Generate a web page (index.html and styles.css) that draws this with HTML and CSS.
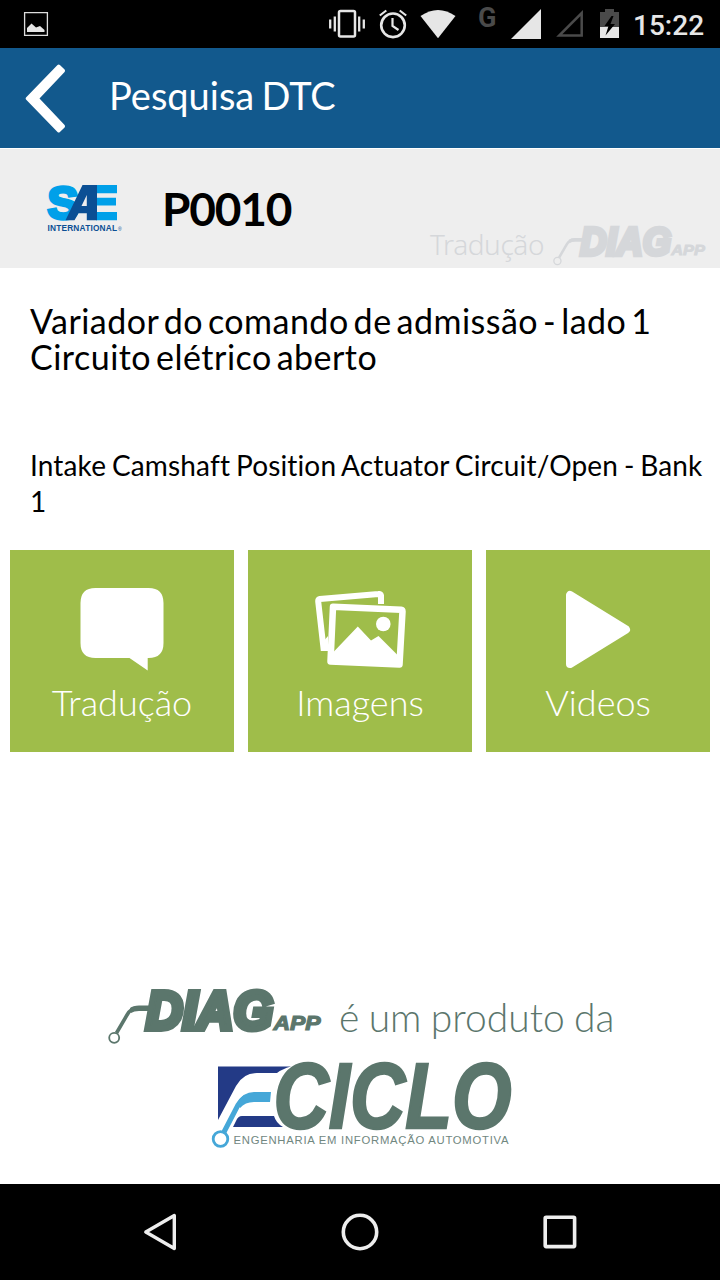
FILE: index.html
```html
<!DOCTYPE html>
<html lang="pt-BR">
<head>
<meta charset="utf-8">
<title>Pesquisa DTC</title>
<link rel="stylesheet" href="styles.css">
</head>
<body>
<div class="screen">
  <div class="status">
    <svg class="s-pic" width="24" height="48" viewBox="24 0 24 48"><path d="M24.600 12.600h22.800v22.800h-22.800z" fill="none" stroke="#ddd" stroke-width="1.300"/><path d="M27 32v-4l4.500-4.500 4.500 4 4-1.500 4.500 4v2z" fill="#e6e6e6"/></svg>
    <svg class="s-vib" width="36" height="48" viewBox="329 0 36 48"><rect x="339" y="11" width="16" height="25.500" rx="1.500" fill="none" stroke="#e6e6e6" stroke-width="2.500"/><path d="M330.200 19.500v9M334.800 16.500v15M359.200 16.500v15M363.800 19.500v9" stroke="#e6e6e6" stroke-width="2.300"/></svg>
    <svg class="s-alarm" width="28" height="48" viewBox="379 0 28 48"><circle cx="393" cy="25.300" r="11.800" fill="none" stroke="#e6e6e6" stroke-width="2.600"/><path d="M379.800 15.500l6.500-5M406.200 15.500l-6.500-5M392.500 18v8l6 4" fill="none" stroke="#e6e6e6" stroke-width="2.200"/></svg>
    <svg class="s-wifi" width="36" height="48" viewBox="420 0 36 48"><path d="M420.500 16Q438 4 455.500 16L438 38.300z" fill="#e6e6e6"/></svg>
    <span class="s-g">G</span>
    <svg class="s-sig" width="30" height="48" viewBox="511 0 30 48"><path d="M541 9v30h-30z" fill="#e6e6e6"/></svg>
    <svg class="s-empty" width="28" height="48" viewBox="555 0 28 48"><path d="M581.700 13v22.500h-22.500z" fill="none" stroke="#4a4a4a" stroke-width="2.500"/></svg>
    <svg class="s-bat" width="19" height="48" viewBox="600 0 19 48"><path d="M600 12h5v-3h9v3h5v15h-19z" fill="#4a4a4a"/><path d="M600 27h19v11h-19z" fill="#e6e6e6"/><path d="M611.500 16l-7 10h4l-3 9.500 9.500-11.500h-4.500l3-8z" fill="#000"/></svg>
    <span class="s-time">15:22</span>
  </div>

  <header class="appbar">
    <svg class="back" width="42" height="72" viewBox="25 62 42 72"><path d="M57.500 65q1.200-1 2.400 0l4.700 4.500q1 1.200 0 2.400L39.500 98.500l25.100 26.600q1 1.200 0 2.400l-4.700 4.500q-1.200 1-2.400 0L26 99.500q-.800-1 0-2z" fill="#fff"/></svg>
    <h1 class="title">Pesquisa DTC</h1>
  </header>

  <section class="code-row">
    <svg class="sae" width="78" height="52" viewBox="46 182 78 52">
      <text class="sae-s" x="47.500" y="219" textLength="31" lengthAdjust="spacingAndGlyphs">S</text>
      <path d="M96 185h21v8.300H96zM96 197.700h20v7.800H96zM96 212h21v8.300H96z" fill="#00a0e9"/>
      <path d="M82.500 185H97v35.300H86.800v-7H78.500l-4 7H65.500zM86.800 195l-5.300 11h5.300z" fill="#0b4f94" fill-rule="evenodd"/>
      <text class="sae-int" x="47.500" y="230.800" textLength="69.500">INTERNATIONAL</text>
      <text class="sae-r" x="118" y="231">®</text>
    </svg>
    <h2 class="code">P0010</h2>
    <div class="watermark">
      <span class="wm-text">Tradução</span>
      <svg class="wm-logo" width="153" height="41" viewBox="0 0 214 57">
        <path d="M8.500 44L19 26Q23 18.800 30 18.800H42" fill="none" stroke="currentColor" stroke-width="3.600"/>
        <path d="M22 19Q25 16.500 31 16.500H42V22H31Q26 22 23 24Z" fill="currentColor"/>
        <circle cx="6.200" cy="48.800" r="5" fill="none" stroke="currentColor" stroke-width="1.800"/>
        <text class="diag-word" x="38" y="40" textLength="127" lengthAdjust="spacingAndGlyphs">DIAG</text>
        <text class="diag-app" x="165.500" y="41" textLength="47" lengthAdjust="spacingAndGlyphs">APP</text>
      </svg>
    </div>
  </section>

  <main class="content">
    <p class="desc-pt">Variador do comando de admissão - lado 1<br>Circuito elétrico aberto</p>
    <p class="desc-en">Intake Camshaft Position Actuator Circuit/Open - Bank<br>1</p>
  </main>

  <nav class="tiles">
    <a class="tile">
      <svg width="224" height="202" viewBox="10 550 224 202"><path d="M95.500 588h53q15 0 15 15v40q0 15-15 15h-.800v12.500L129.500 658H95.500q-15 0-15-15v-40q0-15 15-15z" fill="#fff"/></svg>
      <span class="tile-label">Tradução</span>
    </a>
    <a class="tile">
      <svg width="224" height="202" viewBox="248 550 224 202">
        <path d="M381 604V595.500Q380.500 593.700 378.500 594L320 599Q318 599.500 318.200 601.500L323.500 648H328" fill="none" stroke="#fff" stroke-width="6"/>
        <path d="M323 642l5-6v13h-5z" fill="#fff"/>
        <path d="M333 606.800L401 609.800Q402.500 610 402.500 611.500L399.500 664.500L330.500 661.500z" fill="#9fbd4a" stroke="#fff" stroke-width="6.500" stroke-linejoin="round"/>
        <path d="M333 652.500L357.800 626.500 371 640.500 378.500 636 398 655.500V664H332z" fill="#fff"/>
        <circle cx="383.300" cy="624" r="7.300" fill="#fff"/>
      </svg>
      <span class="tile-label">Imagens</span>
    </a>
    <a class="tile">
      <svg width="224" height="202" viewBox="486 550 224 202"><path d="M570 595v69l56-34.500z" fill="#fff" stroke="#fff" stroke-width="8" stroke-linejoin="round"/></svg>
      <span class="tile-label">Videos</span>
    </a>
  </nav>

  <footer class="brand">
    <div class="brand-line">
      <svg class="brand-diag" width="214" height="57" viewBox="0 0 214 57">
        <path d="M8.500 44L19 26Q23 18.800 30 18.800H42" fill="none" stroke="currentColor" stroke-width="3.600"/>
        <path d="M22 19Q25 16.500 31 16.500H42V22H31Q26 22 23 24Z" fill="currentColor"/>
        <circle cx="6.200" cy="48.800" r="5" fill="none" stroke="currentColor" stroke-width="1.800"/>
        <text class="diag-word" x="38" y="40" textLength="127" lengthAdjust="spacingAndGlyphs">DIAG</text>
        <text class="diag-app" x="165.500" y="41" textLength="47" lengthAdjust="spacingAndGlyphs">APP</text>
      </svg>
      <span class="brand-text">é um produto da</span>
    </div>
    <svg class="ciclo" width="304" height="90" viewBox="210 1060 304 90">
      <path d="M218 1066.500H291Q282 1069 277 1073H257Q243 1073 236 1086L218 1120z" fill="#233a86"/>
      <path d="M242 1116H274Q276 1123 283 1127H233L236 1121Q238 1116 242 1116z" fill="#233a86"/>
      <path d="M224 1132L238 1105Q243 1096 252 1096" fill="none" stroke="#45a7d8" stroke-width="5"/>
      <path d="M237 1103Q243 1092 254 1092H271L270 1102H254Q245 1102 240 1108z" fill="#45a7d8"/>
      <circle cx="220.500" cy="1139" r="7.300" fill="#fff" stroke="#45a7d8" stroke-width="2.800"/>
      <text class="ciclo-word" x="273.500" y="1128" textLength="238" lengthAdjust="spacingAndGlyphs">CICLO</text>
      <text class="ciclo-sub" x="233.500" y="1144.300" textLength="275">ENGENHARIA EM INFORMAÇÃO AUTOMOTIVA</text>
    </svg>
  </footer>

  <div class="navbar">
    <svg width="40" height="40" viewBox="140 1212 40 40"><path d="M174.300 1215.500v33L145.800 1232z" fill="none" stroke="#eee" stroke-width="3.400" stroke-linejoin="round"/></svg>
    <svg width="40" height="40" viewBox="340 1212 40 40"><circle cx="360" cy="1232" r="16.700" fill="none" stroke="#eee" stroke-width="3.600"/></svg>
    <svg width="40" height="40" viewBox="540 1212 40 40"><rect x="545.200" y="1217.200" width="29.400" height="29.400" rx="1" fill="none" stroke="#eee" stroke-width="3.600"/></svg>
  </div>
</div>
</body>
</html>
```
FILE: styles.css
```css
* { box-sizing: border-box; margin: 0; padding: 0; }
body { background: #fff; font-family: Lato, sans-serif; font-variant-ligatures: none; color: #000; }
svg { display: block; flex: none; overflow: visible; }
.screen { width: 720px; height: 1280px; display: flex; flex-direction: column; overflow: hidden; }

.status { height: 48px; background: #000; display: flex; padding-left: 24px; flex: none; }
.s-vib { margin-left: 281px; }
.s-alarm { margin-left: 14px; }
.s-wifi { margin-left: 13px; }
.s-g { margin-left: 22px; width: 18px; font: bold 27px/36px Roboto, sans-serif; color: #4a4a4a; }
.s-sig { margin-left: 15px; }
.s-empty { margin-left: 14px; }
.s-bat { margin-left: 17px; }
.s-time { margin-left: 14px; font: 500 28px/51px Roboto, sans-serif; color: #e6e6e6; white-space: nowrap; }

.appbar { height: 100px; background: #12598d; display: flex; padding: 14px 0 0 25px; flex: none; }
.title { margin-left: 42px; font-size: 38px; font-weight: 400; line-height: 66px; word-spacing: -2.500px; color: #fff; white-space: nowrap; }

.code-row { height: 120px; border-top: 1px solid #fff; background: #eee; display: flex; padding-left: 46px; flex: none; }
.sae { margin-top: 33px; }
.sae-s { font: bold 47px "Liberation Sans", sans-serif; fill: #00a0e9; stroke: #00a0e9; stroke-width: 3.500px; }
.sae-int { font: bold 8.300px "Liberation Sans", sans-serif; fill: #0b4f94; }
.sae-r { font: 5px "Liberation Sans", sans-serif; fill: #0b4f94; }
.code { margin-left: 38px; width: 140px; font-size: 46px; font-weight: 700; line-height: 120px; letter-spacing: -1.200px; }
.watermark { display: flex; margin: 74px 0 0 128px; color: #d5d7da; }
.wm-text { width: 123px; font: 300 28px/42px "Noto Sans", sans-serif; letter-spacing: -.4px; }
.wm-logo { margin-top: 3px; }

.diag-word { font: italic bold 54px "Liberation Sans", sans-serif; fill: currentColor; stroke: currentColor; stroke-width: 6px; }
.diag-app { font: italic bold 20px "Liberation Sans", sans-serif; fill: currentColor; stroke: currentColor; stroke-width: 1.200px; }

.content { height: 282px; padding: 35px 0 0 30px; flex: none; white-space: nowrap; }
.desc-pt { font-size: 34px; line-height: 36px; letter-spacing: .48px; word-spacing: -4.200px; }
.desc-en { margin-top: 72px; font-size: 28px; line-height: 36px; letter-spacing: .15px; word-spacing: -1.500px; }

.tiles { display: grid; grid-template-columns: repeat(3, 224px); gap: 14px; padding-left: 10px; height: 202px; flex: none; }
.tile { display: grid; background: #9fbd4a; color: #fff; }
.tile > * { grid-area: 1 / 1; }
.tile-label { align-self: end; justify-self: center; font-size: 36px; font-weight: 300; line-height: 44px; margin-bottom: 28px; white-space: nowrap; }

.brand { flex: 1; padding-top: 237px; color: #5b766c; }
.brand-line { display: flex; height: 56px; padding-left: 108px; }
.brand-text { margin-left: 17px; font-size: 39px; font-weight: 300; line-height: 56px; word-spacing: -1.300px; white-space: nowrap; }
.ciclo { margin: 15px 0 0 210px; }
.ciclo-word { font: italic bold 92px "Liberation Sans", sans-serif; fill: #5b766c; stroke: #5b766c; stroke-width: 2.500px; }
.ciclo-sub { font: 11.300px "Liberation Sans", sans-serif; fill: #71877f; }

.navbar { height: 96px; background: #000; display: flex; align-items: center; gap: 160px; padding-left: 140px; flex: none; }
```
